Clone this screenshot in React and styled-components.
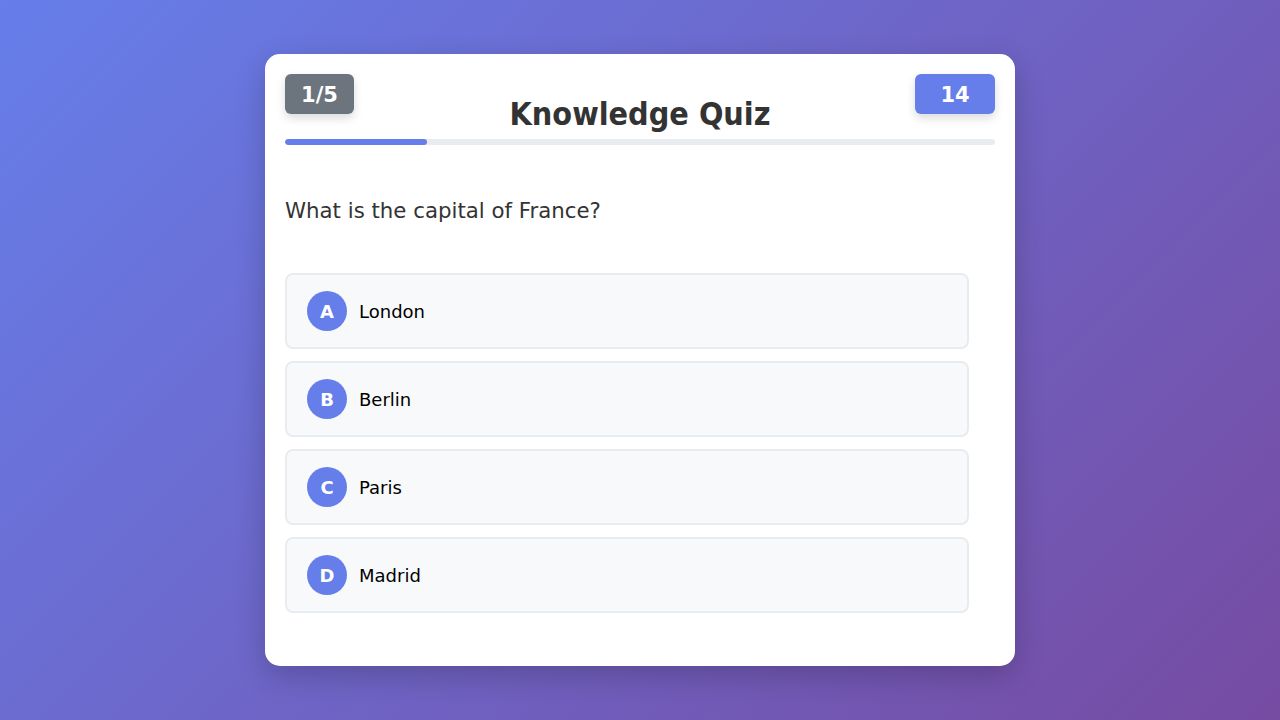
import React from 'react';
import styled, { createGlobalStyle } from 'styled-components';

const GlobalStyle = createGlobalStyle`
  * { box-sizing: border-box; }
  html, body {
    margin: 0;
    padding: 0;
    height: 100%;
  }
  body {
    font-family: "DejaVu Sans", Verdana, sans-serif;
    background: linear-gradient(135deg, #667eea 0%, #764ba2 100%);
    min-height: 720px;
  }
`;

const Page = styled.div`
  min-height: 720px;
  display: flex;
  justify-content: center;
  align-items: center;
`;

const Card = styled.div`
  position: relative;
  width: 750px;
  height: 612px;
  background: white;
  border-radius: 15px;
  padding: 20px;
  box-shadow: 0 10px 30px rgba(0, 0, 0, 0.2);
`;

const Header = styled.div`
  position: relative;
  padding-top: 20px;
`;

const Badge = styled.div`
  position: absolute;
  top: 0;
  ${props => (props.$right ? 'right: 0;' : 'left: 0;')}
  min-width: ${props => (props.$right ? '80px' : '69px')};
  height: 40px;
  padding: 2px 12px 0;
  border-radius: 6px;
  background: ${props => props.$bg};
  color: white;
  font-weight: 700;
  font-size: 21px;
  display: flex;
  align-items: center;
  justify-content: center;
  box-shadow: 0 4px 10px rgba(0, 0, 0, 0.15);
`;

const Title = styled.h1`
  margin: 0 0 5px 0;
  text-align: center;
  font-family: "DejaVu Sans Condensed", "DejaVu Sans", sans-serif;
  font-stretch: condensed;
  font-size: 32px;
  font-weight: 700;
  color: #333;
  line-height: 40px;
`;

const ProgressTrack = styled.div`
  height: 6px;
  background: #e9ecef;
  border-radius: 3px;
  overflow: hidden;
`;

const ProgressFill = styled.div`
  height: 100%;
  background: #667eea;
  border-radius: 3px;
`;

const Question = styled.p`
  margin: 44px 0 0 0;
  font-size: 21.3px;
  line-height: 44px;
  color: #333;
`;

const Options = styled.div`
  margin-top: 40px;
  width: 684px;
  display: flex;
  flex-direction: column;
  gap: 12px;
`;

const Option = styled.div`
  display: flex;
  align-items: center;
  gap: 12px;
  height: 76px;
  padding: 0 20px;
  background: #f8f9fa;
  border: 2px solid #e9ecef;
  border-radius: 8px;
  font-size: 18px;
  color: #000;
  cursor: pointer;
`;

const Letter = styled.span`
  width: 40px;
  height: 40px;
  border-radius: 50%;
  background: #667eea;
  color: white;
  font-weight: 700;
  font-size: 18px;
  display: flex;
  align-items: center;
  justify-content: center;
  flex-shrink: 0;
`;

const options = ['London', 'Berlin', 'Paris', 'Madrid'];

const App = () => {
  const current = 1;
  const total = 5;

  return (
    <>
      <GlobalStyle />
      <Page>
        <Card>
          <Header>
            <Badge $bg="#6c757d">{current}/{total}</Badge>
            <Badge $bg="#667eea" $right>14</Badge>
            <Title>Knowledge Quiz</Title>
            <ProgressTrack>
              <ProgressFill style={{ width: `${(current / total) * 100}%` }} />
            </ProgressTrack>
          </Header>
          <Question>What is the capital of France?</Question>
          <Options>
            {options.map((opt, i) => (
              <Option key={opt}>
                <Letter>{String.fromCharCode(65 + i)}</Letter>
                {opt}
              </Option>
            ))}
          </Options>
        </Card>
      </Page>
    </>
  );
};

export default App;
